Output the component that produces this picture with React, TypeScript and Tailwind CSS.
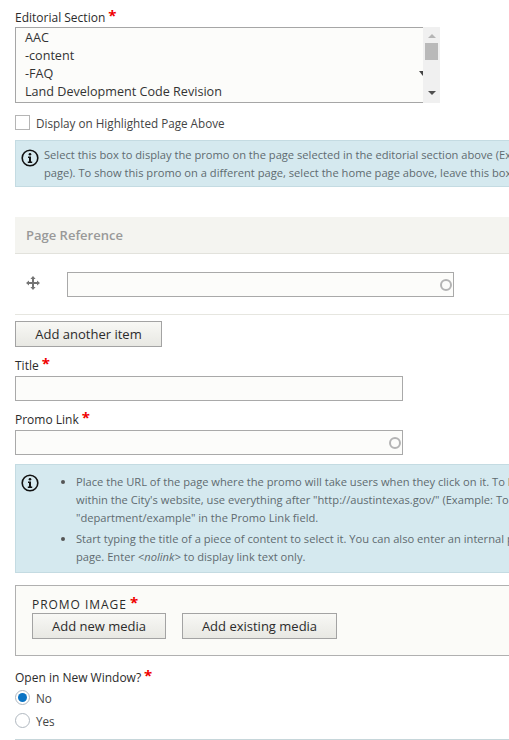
import type { ReactNode } from "react";

function Star() {
  return <span className="relative top-[-1px] ml-[3px] text-[15px] leading-[0] font-bold text-[#f00000]">*</span>;
}

function FieldLabel({ children }: { children: ReactNode }) {
  return (
    <label className="block h-[18px] pt-px text-[12px] leading-[18px] text-[#2b2b2b]">
      {children}
      <Star />
    </label>
  );
}

function Throbber() {
  return <span className="h-[12px] w-[12px] rounded-full border-2 border-[#b4b4b4]" />;
}

function InfoIcon() {
  return (
    <svg viewBox="0 0 18 18" className="h-[18px] w-[18px] shrink-0">
      <circle cx="9" cy="9" r="7.8" fill="none" stroke="#111" strokeWidth="1.6" />
      <circle cx="9" cy="5.3" r="1.3" fill="#111" />
      <path d="M7 7.6h3v5h1.2v1.3H6.8v-1.3H8V8.9H7z" fill="#111" />
    </svg>
  );
}

function MoveIcon() {
  return (
    <svg viewBox="0 0 14 14" className="h-[14px] w-[14px]">
      <path
        d="M7 0 9.6 3H8v3h3V4.4L14 7l-3 2.6V8H8v3h1.6L7 14l-2.6-3H6V8H3v1.6L0 7l3-2.6V6h3V3H4.4z"
        fill="#747474"
      />
    </svg>
  );
}

function GrayButton({ children, width }: { children: ReactNode; width: string }) {
  return (
    <button
      className={`h-[26px] ${width} border border-[#a3a3a3] bg-gradient-to-b from-[#f8f8f5] to-[#e8e8e3] text-center text-[13px] leading-[22px] text-[#2b2b2b]`}
    >
      {children}
    </button>
  );
}

const options = ["AAC", "-content", "-FAQ", "Land Development Code Revision"];

export default function App() {
  return (
    <div className="h-[740px] w-[509px] overflow-hidden bg-white font-['Open_Sans',sans-serif] text-[11.7px]">
      <div className="w-[800px] px-[15px] pt-[8px]">
        {/* Editorial section */}
        <FieldLabel>Editorial Section</FieldLabel>
        <div className="mt-[1px] flex h-[76px] w-[425px] border border-r-0 border-[#a6a6a6] bg-[#fcfcfa]">
          <ul className="relative flex-1 pt-px pl-[9px] text-[12.6px] leading-[18px] text-[#333]">
            {options.map((o) => (
              <li key={o}>{o}</li>
            ))}
            <span className="absolute top-[43px] right-[0px] h-0 w-0 border-t-[5px] border-l-[4px] border-t-[#444] border-l-transparent" />
          </ul>
          <div className="relative mt-[-1px] mb-[-1px] flex w-[17px] flex-col items-center bg-[#f0f0f0]">
            <span className="mt-[7px] h-0 w-0 border-x-[4px] border-b-[4px] border-x-transparent border-b-[#b5b5b5]" />
            <span className="mt-[5px] h-[17px] w-[13px] bg-[#b9b9b9]" />
            <span className="mt-auto mb-[8px] h-0 w-0 border-x-[4px] border-t-[4px] border-x-transparent border-t-[#505050]" />
          </div>
        </div>

        <div className="mt-[12px] flex h-[15px] items-center gap-[6px]">
          <span className="h-[15px] w-[15px] border border-[#b5b5b5] bg-white" />
          <span className="leading-[18px] text-[#444]">Display on Highlighted Page Above</span>
        </div>

        <div className="mt-[10px] flex h-[47px] gap-[5px] border border-[#c4dbe2] bg-[#d5e9ef] pl-[5px] text-[11.15px] leading-[18px] whitespace-nowrap text-[#5f6b70]">
          <div className="pt-[8px]">
            <InfoIcon />
          </div>
          <p className="pt-[5px]">
            Select this box to display the promo on the page selected in the editorial section above (Example: a department
            <br />
            page). To show this promo on a different page, select the home page above, leave this box unchecked and choose
          </p>
        </div>

        {/* Page reference */}
        <div className="mt-[30px] flex h-[37px] items-center border-b border-[#e2e2dc] bg-[#f4f4f0] pt-px pl-[11px] text-[13px] font-semibold text-[#999]">
          Page Reference
        </div>
        <div className="flex h-[61px] border-b border-[#e6e6e0]">
          <div className="mt-[22px] ml-[11px] h-[14px]">
            <MoveIcon />
          </div>
          <div className="mt-[18px] ml-[27px] flex h-[25px] w-[387px] items-center justify-end border border-[#a9a9a9] bg-[#fcfcfa] pr-[1px]">
            <Throbber />
          </div>
        </div>

        <div className="mt-[6px]">
          <GrayButton width="w-[147px]">Add another item</GrayButton>
        </div>

        {/* Title and link */}
        <div className="mt-[9px]">
          <FieldLabel>Title</FieldLabel>
          <div className="mt-[2px] h-[25px] w-[388px] border border-[#a9a9a9] bg-[#fcfcfa]" />
        </div>
        <div className="mt-[9px]">
          <FieldLabel>Promo Link</FieldLabel>
          <div className="mt-[2px] flex h-[25px] w-[388px] items-center justify-end border border-[#a9a9a9] bg-[#fcfcfa] pr-[1px]">
            <Throbber />
          </div>
        </div>

        <div className="mt-[9px] flex h-[109px] border border-[#c4dbe2] bg-[#d5e9ef] pl-[5px] text-[11.15px] leading-[18px] whitespace-nowrap text-[#5f6b70]">
          <div className="pt-[9px]">
            <InfoIcon />
          </div>
          <ul className="ml-[37px] list-disc pt-[8px] marker:text-[#555]">
            <li>
              Place the URL of the page where the promo will take users when they click on it. To link to a page
              <br />
              within the City's website, use everything after "http://austintexas.gov/" (Example: To link to a page, enter
              <br />
              "department/example" in the Promo Link field.
            </li>
            <li className="mt-[3px]">
              Start typing the title of a piece of content to select it. You can also enter an internal path for a
              <br />
              page. Enter <em>&lt;nolink&gt;</em> to display link text only.
            </li>
          </ul>
        </div>

        {/* Promo image */}
        <div className="mt-[12px] h-[71px] border border-[#b0b0b0] bg-[#fbfbf8] pt-[9px] pl-[16px]">
          <div className="h-[18px] pt-px text-[12px] leading-[18px] tracking-[0.08em] text-[#2b2b2b]">
            PROMO IMAGE
            <Star />
          </div>
          <div className="flex gap-[16px]">
            <GrayButton width="w-[134px]">Add new media</GrayButton>
            <GrayButton width="w-[155px]">Add existing media</GrayButton>
          </div>
        </div>

        {/* Open in new window */}
        <div className="mt-[12px]">
          <FieldLabel>Open in New Window?</FieldLabel>
          <div className="flex h-[23px] items-center gap-[6px]">
            <span className="flex h-[15px] w-[15px] items-center justify-center rounded-full border border-[#b0b8c0] bg-white">
              <span className="h-[9px] w-[9px] rounded-full bg-[#0b74c4]" />
            </span>
            <span className="leading-[18px] text-[#444]">No</span>
          </div>
          <div className="flex h-[23px] items-center gap-[6px]">
            <span className="h-[15px] w-[15px] rounded-full border border-[#b0b8c0] bg-white" />
            <span className="leading-[18px] text-[#444]">Yes</span>
          </div>
        </div>
        <div className="mt-[7px] h-px bg-[#c6d6da]" />
      </div>
    </div>
  );
}
